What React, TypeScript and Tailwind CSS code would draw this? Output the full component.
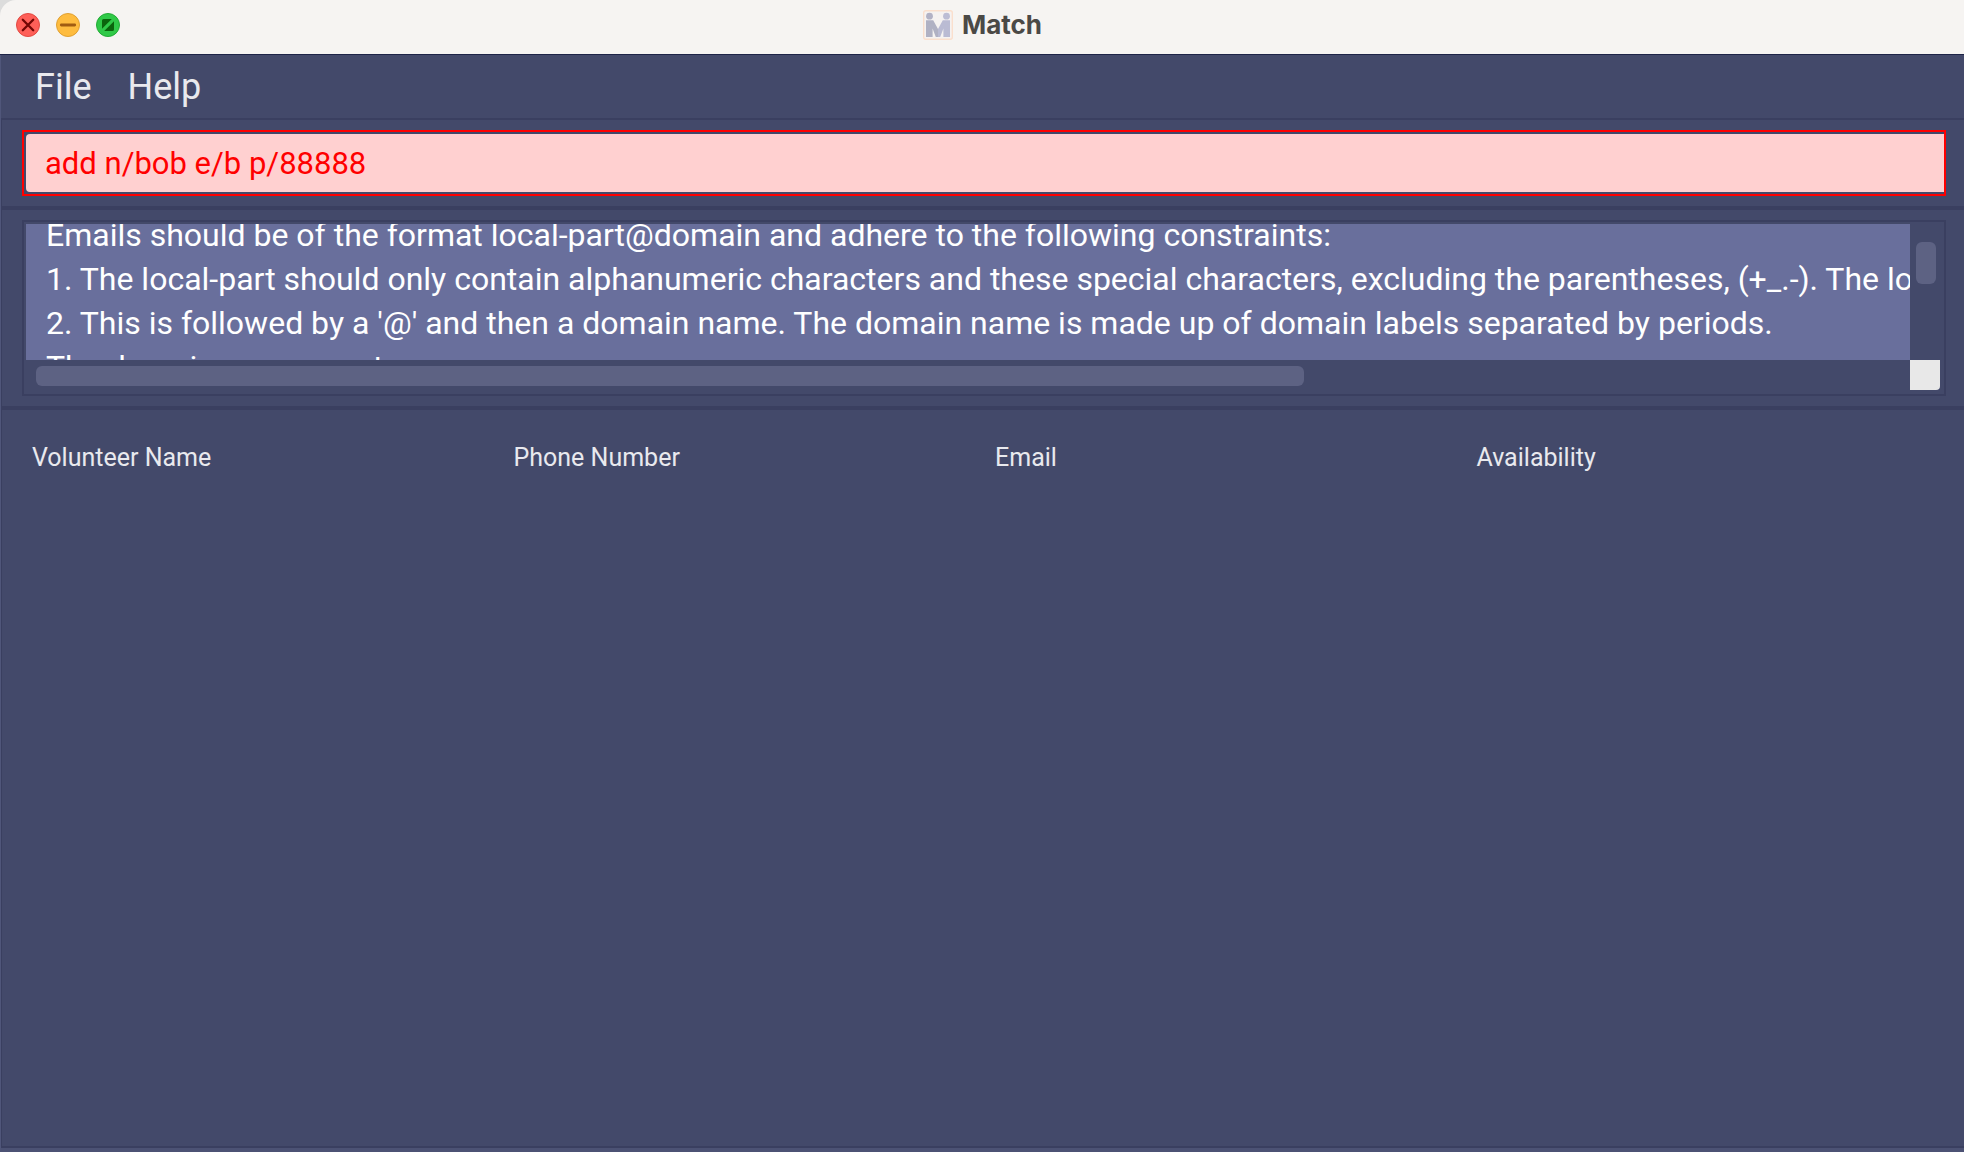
import { useLayoutEffect, useRef, useState } from "react";

const FEEDBACK = [
  "Emails should be of the format local-part@domain and adhere to the following constraints:",
  "1. The local-part should only contain alphanumeric characters and these special characters, excluding the parentheses, (+_.-). The local-part may not start or end with any special characters.",
  "2. This is followed by a '@' and then a domain name. The domain name is made up of domain labels separated by periods.",
  "The domain name must:",
  "    - end with a domain label at least 2 characters long",
  "    - have each domain label start and end with alphanumeric characters",
  "    - have each domain label consist of alphanumeric characters, separated only by hyphens, if any.",
].join("\n");

const COLUMNS = ["Volunteer Name", "Phone Number", "Email", "Availability"];

function CloseIcon() {
  return (
    <svg viewBox="0 0 24 24" className="size-6" aria-hidden="true">
      <circle cx="12" cy="12" r="11.5" fill="#fe5f58" stroke="#e14942" />
      <path d="M6.8 6.8l10.4 10.4M17.2 6.8L6.8 17.2" stroke="#720604" strokeWidth="2.3" strokeLinecap="round" />
    </svg>
  );
}

function MinimiseIcon() {
  return (
    <svg viewBox="0 0 24 24" className="size-6" aria-hidden="true">
      <circle cx="12" cy="12" r="11.5" fill="#febc3f" stroke="#e0a033" />
      <path d="M5.3 12h13.4" stroke="#a05c12" strokeWidth="2.8" strokeLinecap="round" />
    </svg>
  );
}

function FullScreenIcon() {
  return (
    <svg viewBox="0 0 24 24" className="size-6" aria-hidden="true">
      <circle cx="12" cy="12" r="11.5" fill="#30c948" stroke="#22ab35" />
      <path d="M6 15.8V7.6Q6 6 7.6 6h8.2zM18 8.2v8.2q0 1.6-1.6 1.6H8.2z" fill="#0b650d" />
    </svg>
  );
}

function MatchLogo() {
  return (
    <svg viewBox="0 0 30 30" className="size-[30px]" aria-hidden="true">
      <rect x="0.7" y="0.7" width="28.6" height="28.6" rx="2" fill="#f5f2f1" stroke="#fadfcd" strokeWidth="1.4" />
      <circle cx="6.5" cy="6.2" r="3.4" fill="#b2b2c5" />
      <circle cx="23.5" cy="6.2" r="3.4" fill="#bcbdd4" />
      <path d="M3 10.3h7.2L15 19v8h-2.200L9.600 18.500V27H3z" fill="#b0b1c3" />
      <path d="M27 10.3h-7.2L15 19v8h2.200L20.400 18.500V27H27z" fill="#babbd3" />
    </svg>
  );
}

function TitleBar() {
  return (
    <div className="bg-[#dcdcdc]">
      <header className="grid h-[55px] grid-cols-[1fr_auto_1fr] items-center rounded-tl-2xl border-b border-[#1e2447] bg-[#f6f4f2] px-4">
        <div className="flex gap-4 pb-1">
          <button aria-label="Close"><CloseIcon /></button>
          <button aria-label="Minimise"><MinimiseIcon /></button>
          <button aria-label="Full screen"><FullScreenIcon /></button>
        </div>
        <div className="flex items-center gap-[9px] pb-1 pl-px">
          <MatchLogo />
          <h1 className="font-['Inter',sans-serif] text-[26px] leading-8 font-bold text-[#4b4946]">Match</h1>
        </div>
      </header>
    </div>
  );
}

function ResultDisplay() {
  const area = useRef<HTMLTextAreaElement>(null);
  useLayoutEffect(() => {
    if (area.current) area.current.scrollTop = 19;
  }, []);
  return (
    <section className="border-2 border-r-0 border-l border-[#3a3f60] py-[10px] pr-[18px] pl-5">
      <div className="grid grid-cols-[1fr_30px] grid-rows-[136px_30px] border-2 border-[#3a3f60] pt-0.5 pr-1 pb-1 pl-0.5">
        <textarea
          ref={area}
          readOnly
          wrap="off"
          aria-label="Result"
          defaultValue={FEEDBACK}
          className="block size-full resize-none overflow-hidden bg-[#696f9c] px-5 py-2 text-[32px] leading-[44px] whitespace-pre text-white outline-none"
        />
        <div className="pt-[18px] pr-1 pl-1.5">
          <div className="h-[42px] rounded-md bg-[#5d6283]" />
        </div>
        <div className="px-[10px] py-1.5">
          <div className="h-5 w-[68%] rounded-md bg-[#5d6283]" />
        </div>
        <div className="rounded-br bg-[#e8e8e8]" />
      </div>
    </section>
  );
}

export default function App() {
  const [command, setCommand] = useState("add n/bob e/b p/88888");
  return (
    <div className="flex min-h-screen flex-col bg-[#43496a] font-['Roboto',sans-serif] text-[#e9e9ee]">
      <TitleBar />
      <div className="flex flex-1 flex-col border-b-4 border-l border-b-[#4c5274] border-l-[#50567a]">
        <nav className="flex h-[63px] items-center gap-9 px-[34px] text-[36px] leading-10">
          <button>File</button>
          <button>Help</button>
        </nav>
        <section className="border-2 border-r-0 border-l border-[#3a3f60] py-[10px] pr-[18px] pl-5">
          <div className="border-2 border-[#ff0000] py-0.5 pl-0.5">
            <input
              aria-label="Command"
              spellCheck={false}
              value={command}
              onChange={(e) => setCommand(e.target.value)}
              className="block h-[58px] w-full rounded-l bg-[#ffd0d0] px-[19px] text-[31px] text-[#ff0000] outline-none"
            />
          </div>
        </section>
        <ResultDisplay />
        <main className="flex-1 border-2 border-r-0 border-l border-[#3a3f60] pt-7 pr-4 pl-5">
          <table className="w-full table-fixed">
            <thead>
              <tr>
                {COLUMNS.map((name) => (
                  <th key={name} scope="col" className="px-[10px] text-left text-[25px] leading-10 font-normal">
                    {name}
                  </th>
                ))}
              </tr>
            </thead>
          </table>
        </main>
      </div>
    </div>
  );
}
